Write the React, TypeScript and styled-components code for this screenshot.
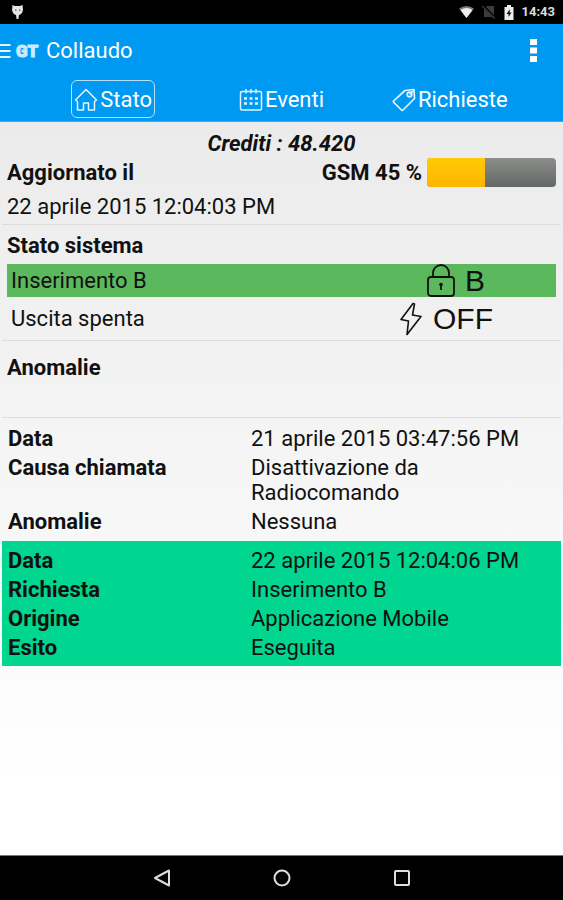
import React from 'react';
import styled, { createGlobalStyle } from 'styled-components';

const GlobalStyle = createGlobalStyle`
  * { box-sizing: border-box; }
  body {
    margin: 0;
    background: #fff;
    font-family: Roboto, "Liberation Sans", sans-serif;
    color: #111;
  }
  button { font: inherit; color: inherit; background: none; border: 0; padding: 0; cursor: pointer; }
`;

const Screen = styled.div`
  display: flex;
  flex-direction: column;
  min-height: 100vh;
`;

const StatusBar = styled.div`
  display: flex;
  align-items: center;
  justify-content: space-between;
  height: 24px;
  padding: 0 8px 0 11px;
  background: #000;
  color: #ddd;
`;

const StatusIcons = styled.div`
  display: flex;
  align-items: center;
  gap: 8px;
`;

const Clock = styled.time`
  font-size: 13px;
  font-weight: 700;
  line-height: 24px;
`;

const AppHeader = styled.header`
  background: #0099f2;
  color: #fff;
  border-bottom: 1px solid #5c9fd6;
`;

const TitleRow = styled.div`
  display: flex;
  align-items: center;
  height: 54px;
  padding-right: 25px;
`;

const MenuButton = styled.button`
  display: flex;
  width: 16px;
`;

const Logo = styled.span`
  width: 30px;
  font-size: 17px;
  font-weight: 900;
  line-height: 20px;
  color: #c9ecff;
  -webkit-text-stroke: 1px #c9ecff;
`;

const Title = styled.h1`
  flex: 1;
  margin: 0;
  font-size: 22px;
  font-weight: 400;
  line-height: 26px;
`;

const OverflowButton = styled.button`
  display: flex;
`;

const Tabs = styled.nav`
  display: grid;
  grid-template-columns: repeat(3, 1fr);
  justify-items: center;
  padding: 2px 29px 3px;
`;

const Tab = styled.button<{ $active?: boolean }>`
  display: flex;
  align-items: center;
  gap: 2px;
  height: 38px;
  padding: 2px 2px 0;
  border: 1px solid ${(p) => (p.$active ? '#b5dffb' : 'transparent')};
  border-radius: 6px;
  font-size: 22px;
  line-height: 26px;
`;

const Main = styled.main`
  flex: 1;
  padding: 9px 2px 0;
  background: linear-gradient(#ebebeb, #f6f6f6 50%, #fff 90%);
  font-size: 22px;
  line-height: 25px;
`;

const Section = styled.section<{ $pad: string }>`
  padding: ${(p) => p.$pad};
  border-bottom: 1px solid #dcdcdc;
`;

const Credits = styled.p`
  margin: 0;
  font-style: italic;
  font-weight: 700;
  text-align: center;
`;

const Heading = styled.h2`
  margin: 0;
  font-size: 22px;
  font-weight: 700;
  line-height: 25px;
`;

const UpdateRow = styled.div`
  display: flex;
  align-items: center;
  justify-content: space-between;
  height: 32px;
`;

const Signal = styled.div`
  display: flex;
  align-items: center;
  gap: 5px;
  font-weight: 700;
`;

const Meter = styled.div`
  width: 129px;
  height: 29px;
  border-radius: 4px;
  overflow: hidden;
  background: linear-gradient(#8c8e8b, #646864);
`;

const MeterFill = styled.div`
  height: 100%;
  background: linear-gradient(#ffcb05, #ffb400);
`;

const DateText = styled.p`
  margin: 0;
  padding-top: 6px;
`;

const StateList = styled.div`
  padding-top: 6px;
`;

const StateRow = styled.div<{ $on?: boolean }>`
  display: grid;
  grid-template-columns: 1fr 220px;
  align-items: center;
  height: ${(p) => (p.$on ? 33 : 43)}px;
  padding-left: 4px;
  background: ${(p) => (p.$on ? '#5cb85c' : 'transparent')};
`;

const StateValue = styled.div<{ $indent?: boolean }>`
  display: flex;
  align-items: center;
  justify-content: center;
  gap: 10px;
  padding-left: ${(p) => (p.$indent ? 20 : 0)}px;
  font-family: "Liberation Sans", Arial, sans-serif;
  font-size: 30px;
  line-height: 33px;
`;

const Record = styled.section<{ $done?: boolean }>`
  padding: ${(p) => (p.$done ? '5px 13px 4px 6px' : '6px 13px 5px 6px')};
  background: ${(p) => (p.$done ? '#00d68f' : 'transparent')};
`;

const RecordTable = styled.table`
  width: 100%;
  table-layout: fixed;
  border-collapse: collapse;
  text-align: left;
  th, td { padding: 2px 0; vertical-align: top; }
  th { width: 45%; font-weight: 700; }
`;

const SystemNav = styled.nav`
  display: grid;
  grid-template-columns: repeat(3, 120px);
  justify-content: center;
  align-items: center;
  height: 45px;
  border-top: 1px solid #777;
  background: #000;
`;

const NavButton = styled.button`
  display: flex;
  justify-content: center;
`;

const HomeIcon = () => (
  <svg width="24" height="24" viewBox="0 0 24 24" fill="none" stroke="#e6f6ff" strokeWidth="1.5" strokeLinejoin="round">
    <path d="M1.5 12 12 1.5 22.5 12 20.5 13.5V22H14.5V15H9.5V22H3.5V13.5Z" />
  </svg>
);

const CalendarIcon = () => (
  <svg width="24" height="24" viewBox="0 0 24 24" fill="none" stroke="#e0f3ff" strokeWidth="1.5">
    <rect x="1.5" y="3.5" width="21" height="18.5" rx="1.5" />
    <path d="M7 1V5.500M12 1V5.500M17 1V5.500" />
    <path d="M5 10.500H8M10.500 10.500H13.500M16 10.500H19M5 15.500H8M10.500 15.500H13.500M16 15.500H19" strokeWidth="2.6" />
  </svg>
);

const TagIcon = () => (
  <svg width="24" height="24" viewBox="0 0 24 24" fill="none" stroke="#e0f3ff" strokeWidth="1.7" strokeLinejoin="round">
    <path d="M13 2.5 22 1.5 22.5 10.5 11 22Q10.300 22.600 9.500 22L1.700 14.300Q1 13.500 1.700 12.800Z" />
    <circle cx="17.500" cy="6.500" r="2.300" />
    <path d="M17.500 6.500 21 3" />
  </svg>
);

const LockIcon = () => (
  <svg width="28" height="33" viewBox="0 0 28 33" fill="none" stroke="#111" strokeWidth="1.8">
    <rect x="1" y="13" width="26" height="19" rx="3" />
    <path d="M6 13V9A8 8 0 0 1 22 9V13" />
    <circle cx="14" cy="20.5" r="1.8" fill="#111" stroke="none" />
    <path d="M14 21V26" />
  </svg>
);

const BoltIcon = () => (
  <svg width="24" height="34" viewBox="0 0 24 34" fill="none" stroke="#111" strokeWidth="1.6" strokeLinejoin="round">
    <path d="M14 1.5 2 17.5 9.5 19 8 32.5 22 14.5 13.5 13 15.5 2Z" />
  </svg>
);

type RecordData = { done?: boolean; rows: [string, string][] };

const records: RecordData[] = [
  {
    rows: [
      ['Data', '21 aprile 2015 03:47:56 PM'],
      ['Causa chiamata', 'Disattivazione da Radiocomando'],
      ['Anomalie', 'Nessuna'],
    ],
  },
  {
    done: true,
    rows: [
      ['Data', '22 aprile 2015 12:04:06 PM'],
      ['Richiesta', 'Inserimento B'],
      ['Origine', 'Applicazione Mobile'],
      ['Esito', 'Eseguita'],
    ],
  },
];

export default function App() {
  const signal = 45;
  return (
    <>
      <GlobalStyle />
      <Screen>
        <StatusBar>
          <svg width="13" height="16" viewBox="0 0 13 16" fill="#e4e4e4">
            <path d="M1.5 1 4 2H9L11.5 1 12 6Q11 10.5 8 11L7.4 15H5.6L5 11Q2 10.5 1 6Z" />
            <path d="M4 5.5H5.5V7H4ZM8 5.5H9.5V7H8Z" fill="#777" />
          </svg>
          <StatusIcons>
            <svg width="15" height="12" viewBox="0 0 15 12">
              <path d="M0 2.5Q7.5-2.5 15 2.5L7.5 12Z" fill="#777" />
              <path d="M1.5 4Q7.5 0 13.5 4L7.5 12Z" fill="#eee" />
            </svg>
            <svg width="14" height="14" viewBox="0 0 14 14">
              <path d="M5 1H12V12H2V4Z" fill="#3c3c3c" />
              <path d="M1 1 13 13" stroke="#000" strokeWidth="2.5" />
              <path d="M0 1 12.5 13.5" stroke="#444" strokeWidth="1.2" />
            </svg>
            <svg width="10" height="15" viewBox="0 0 10 15">
              <path d="M3 0H7V2H9.5V15H.5V2H3Z" fill="#eee" />
              <path d="M6 4 2.5 9H4.5V12L7.5 7.5H5.5Z" fill="#111" />
            </svg>
            <Clock>14:43</Clock>
          </StatusIcons>
        </StatusBar>

        <AppHeader>
          <TitleRow>
            <MenuButton aria-label="Menu">
              <svg width="11" height="14" viewBox="0 0 11 14" stroke="#e6f6ff" strokeWidth="2">
                <path d="M0 1H10.5M0 7H10.5M0 13H10.5" />
              </svg>
            </MenuButton>
            <Logo>GT</Logo>
            <Title>Collaudo</Title>
            <OverflowButton aria-label="Altre opzioni">
              <svg width="9" height="26" viewBox="0 0 9 26" fill="#fff">
                <path d="M1 1H8V7H1ZM1 9.5H8V15.5H1ZM1 18H8V24H1Z" />
              </svg>
            </OverflowButton>
          </TitleRow>
          <Tabs>
            <Tab $active aria-current="page"><HomeIcon />Stato</Tab>
            <Tab><CalendarIcon />Eventi</Tab>
            <Tab><TagIcon />Richieste</Tab>
          </Tabs>
        </AppHeader>

        <Main>
          <Section $pad="0 5px 5px">
            <Credits>Crediti : 48.420</Credits>
            <UpdateRow>
              <Heading>Aggiornato il</Heading>
              <Signal>
                <span id="gsm">GSM {signal} %</span>
                <Meter role="meter" aria-labelledby="gsm" aria-valuemin={0} aria-valuemax={100} aria-valuenow={signal}>
                  <MeterFill style={{ width: `${signal}%` }} />
                </Meter>
              </Signal>
            </UpdateRow>
            <DateText>22 aprile 2015 12:04:03 PM</DateText>
          </Section>
          <Section $pad="8px 5px 0">
            <Heading>Stato sistema</Heading>
            <StateList>
              <StateRow $on>
                <span>Inserimento B</span>
                <StateValue $indent><LockIcon />B</StateValue>
              </StateRow>
              <StateRow>
                <span>Uscita spenta</span>
                <StateValue><BoltIcon />OFF</StateValue>
              </StateRow>
            </StateList>
          </Section>
          <Section $pad="14px 5px 37px">
            <Heading>Anomalie</Heading>
          </Section>
          {records.map((record, i) => (
            <Record key={i} $done={record.done}>
              <RecordTable>
                <tbody>
                  {record.rows.map(([label, value]) => (
                    <tr key={label}>
                      <th scope="row">{label}</th>
                      <td>{value}</td>
                    </tr>
                  ))}
                </tbody>
              </RecordTable>
            </Record>
          ))}
        </Main>

        <SystemNav aria-label="Sistema">
          <NavButton aria-label="Indietro">
            <svg width="18" height="18" viewBox="0 0 18 18" fill="none" stroke="#ddd" strokeWidth="2" strokeLinejoin="round">
              <path d="M16 1.5V16.5L2 9Z" />
            </svg>
          </NavButton>
          <NavButton aria-label="Home">
            <svg width="18" height="18" viewBox="0 0 18 18" fill="none" stroke="#ddd" strokeWidth="2">
              <circle cx="9" cy="9" r="7.5" />
            </svg>
          </NavButton>
          <NavButton aria-label="Recenti">
            <svg width="18" height="18" viewBox="0 0 18 18" fill="none" stroke="#ddd" strokeWidth="2">
              <rect x="2" y="2" width="14" height="14" rx="1" />
            </svg>
          </NavButton>
        </SystemNav>
      </Screen>
    </>
  );
}
